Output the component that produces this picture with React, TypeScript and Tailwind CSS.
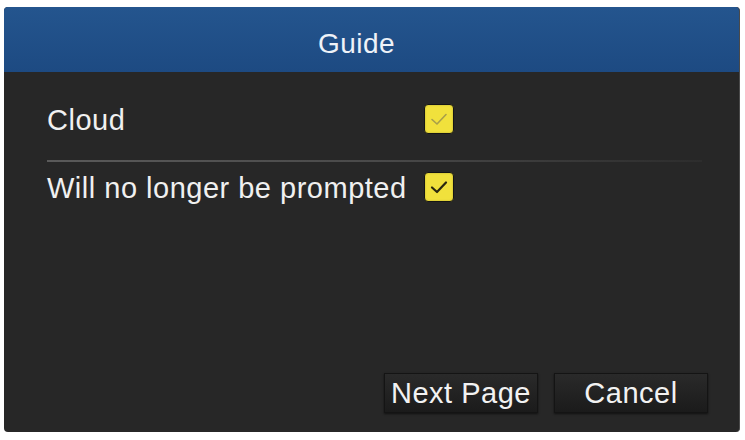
import React, { useState } from "react";

const CheckBox = ({ checked, faded }: { checked: boolean; faded?: boolean }) => (
  <div className="flex h-[30px] w-[30px] items-center justify-center rounded-[4px] border border-[#151515] bg-[#f1e13c] shadow-[inset_0_0_2px_rgba(0,0,0,0.25)]">
    {checked && (
      <svg width="20" height="16" viewBox="0 0 20 16" fill="none">
        <path
          d="M3 8.5 L8 13 L17 3.5"
          stroke={faded ? "#a89f4a" : "#2a2810"}
          strokeWidth={faded ? 1.6 : 2.2}
          strokeLinecap="round"
          strokeLinejoin="round"
        />
      </svg>
    )}
  </div>
);

const DialogButton = ({ label }: { label: string }) => (
  <button className="flex h-[40px] w-[154px] items-center justify-center border border-[#141414] bg-gradient-to-b from-[#2a2a2a] to-[#1b1b1b] text-[29px] leading-none tracking-[0.5px] text-[#f2f2f2] shadow-[0_1px_2px_rgba(0,0,0,0.6)]">
    {label}
  </button>
);

export default function App() {
  const [cloud] = useState(true);
  const [noPrompt] = useState(true);

  return (
    <div className="h-[440px] w-[745px] bg-white pl-[4px] pt-[7px] font-['Liberation_Sans',Arial,sans-serif]">
      <div className="flex h-[425px] w-[736px] flex-col overflow-hidden rounded-[4px] border-r border-[#4a4a4a] bg-[#272727]">
        {/* Title bar */}
        <div className="flex h-[65px] items-center justify-center bg-gradient-to-b from-[#24558e] to-[#1d4a82] pr-[30px] pt-[8px] text-[28px] tracking-[0.5px] text-[#eef2f8]">
          Guide
        </div>

        {/* Body */}
        <div className="flex flex-1 flex-col pl-[43px] pr-[31px] pt-[30px]">
          <div className="flex items-center">
            <span className="w-[377px] pt-[4px] text-[29px] leading-none tracking-[0.5px] text-[#f0f0f0]">Cloud</span>
            <CheckBox checked={cloud} faded />
          </div>

          <div className="mt-[25px] h-[2px] w-[655px] bg-gradient-to-r from-[#5a5a5a] via-[#4a4a4a] to-[#2d2d2d]" />

          <div className="mt-[8px] flex items-center">
            <span className="w-[377px] pt-[4px] text-[29px] leading-none tracking-[0.5px] text-[#f0f0f0]">
              Will no longer be prompted
            </span>
            <CheckBox checked={noPrompt} />
          </div>

          <div className="mt-auto flex justify-end gap-[16px] pb-[19px]">
            <DialogButton label="Next Page" />
            <DialogButton label="Cancel" />
          </div>
        </div>
      </div>
    </div>
  );
}
